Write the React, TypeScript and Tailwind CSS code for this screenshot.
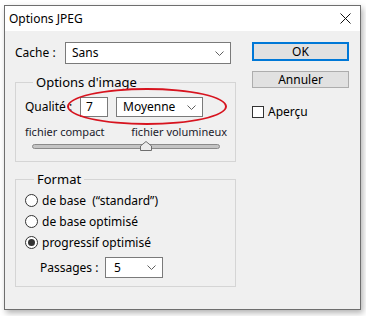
import React from "react";

const Chevron = ({ className = "" }: { className?: string }) => (
  <svg width="9" height="5" viewBox="0 0 9 5" className={className}>
    <path d="M0.5 0.5 L4.5 4.5 L8.5 0.5" fill="none" stroke="#606060" strokeWidth="1" />
  </svg>
);

const Select = ({ value, className }: { value: string; className: string }) => (
  <div className={`flex items-center justify-between border border-[#7a7a7a] bg-white ${className}`}>
    <span>{value}</span>
    <Chevron className="mr-[6px]" />
  </div>
);

const Radio = ({ label, checked }: { label: string; checked?: boolean }) => (
  <div className="flex h-[21px] items-center pl-[9px]">
    <span className="flex h-[13px] w-[13px] items-center justify-center rounded-full border border-[#333] bg-white">
      {checked && <span className="h-[7px] w-[7px] rounded-full bg-[#333]" />}
    </span>
    <span className="ml-[4px] whitespace-pre">{label}</span>
  </div>
);

export default function App() {
  return (
    <div className="h-[316px] w-[366px] bg-white pl-[4px] pt-[5px] font-['Noto_Sans',sans-serif] text-[12px] leading-[16px] text-black">
      <div className="flex h-[305px] w-[357px] flex-col border border-[#6e6e6e] bg-[#f0f0f0] shadow-[2px_3px_6px_rgba(0,0,0,0.3)]">
        {/* title bar */}
        <div className="flex h-[25px] items-center justify-between bg-white pl-[4px] pr-[9px]">
          <span>Options JPEG</span>
          <svg width="11" height="11" viewBox="0 0 11 11">
            <path d="M0.5 0.5 L10.5 10.5 M10.5 0.5 L0.5 10.5" stroke="#111" strokeWidth="1" />
          </svg>
        </div>

        <div className="flex pl-[10px] pt-[11px]">
          {/* left column */}
          <div className="w-[221px]">
            <div className="flex h-[22px] items-center">
              <span className="w-[50px]">Cache :</span>
              <Select value="Sans" className="h-[22px] w-[166px] pl-[6px]" />
            </div>

            <fieldset className="mt-[10px] h-[88px] border border-[#d5d5d5]">
              <legend className="ml-[17px] px-[3px] text-[13px]">Options d'image</legend>
              <div className="relative mt-[7px] flex h-[20px] items-center pl-[9px]">
                <span className="w-[55px] whitespace-pre">Qualité :</span>
                <div className="flex h-[20px] w-[28px] items-center border border-[#7a7a7a] bg-white pl-[5px]">7</div>
                <Select value="Moyenne" className="ml-[8px] h-[20px] w-[87px] pl-[6px]" />
                <div className="absolute left-[51px] top-[-9px] h-[37px] w-[160px] rounded-[50%] border-2 border-[#d7141f]" />
              </div>
              <div className="mt-[8px] flex h-[14px] items-center justify-between pl-[9px] pr-[8px] text-[11px] leading-[14px] text-[#1a1a2a]">
                <span>fichier compact</span>
                <span>fichier volumineux</span>
              </div>
              <div className="relative ml-[16px] mt-[5px] h-[5px] w-[188px] rounded-full border border-[#8a8a8a] bg-[#c4c4c4]">
                <svg width="12" height="10" viewBox="0 0 12 10" className="absolute left-[107px] top-[-4px]">
                  <path d="M0.5 9.5 L0.5 5 L6 0.5 L11.5 5 L11.5 9.5 Z" fill="#ececec" stroke="#6e6e6e" strokeWidth="1" />
                </svg>
              </div>
            </fieldset>

            <fieldset className="mt-[9px] h-[116px] border border-[#d5d5d5]">
              <legend className="ml-[18px] px-[3px] text-[13px]">Format</legend>
              <div className="mt-[3px]">
                <Radio label={"de base  (\u201cstandard\u201d)"} />
                <Radio label="de base optimisé" />
                <Radio label="progressif optimisé" checked />
              </div>
              <div className="mt-[4px] flex h-[21px] items-center pl-[24px]">
                <span className="w-[65px]">Passages :</span>
                <Select value="5" className="h-[21px] w-[58px] pl-[8px]" />
              </div>
            </fieldset>
          </div>

          {/* right column */}
          <div className="ml-[16px] flex w-[97px] flex-col">
            <button className="flex h-[19px] items-center justify-center border-2 border-[#0078d7] bg-[#e1e1e1]">OK</button>
            <button className="mt-[10px] flex h-[17px] items-center justify-center border border-[#adadad] bg-[#e1e1e1]">Annuler</button>
            <div className="mt-[16px] flex items-center">
              <span className="h-[12px] w-[12px] border border-[#333] bg-white" />
              <span className="ml-[4px]">Aperçu</span>
            </div>
          </div>
        </div>
      </div>
    </div>
  );
}
